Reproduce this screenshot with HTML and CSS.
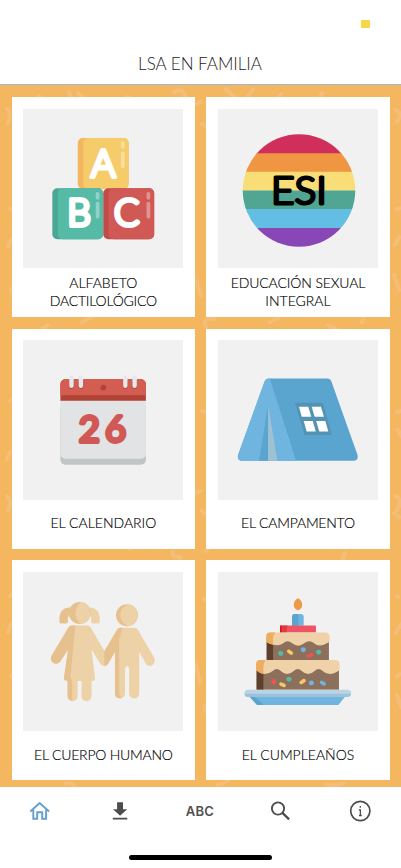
FILE: index.html
```
<!DOCTYPE html>
<html lang="es">
<head>
<meta charset="utf-8">
<meta name="viewport" content="width=device-width, initial-scale=1">
<title>LSA en familia</title>
<link rel="stylesheet" href="styles.css">
</head>
<body>
<div class="app">
  <header class="header">
    <div class="status"><span class="battery"></span></div>
    <h1 class="title">LSA EN FAMILIA</h1>
  </header>

  <main class="content">
    <svg class="confetti" viewBox="0 85 401 702" aria-hidden="true">
      <path d="M69 92l3 7M78 93l5 5M39 96l3 3M127 97l3 1M174 92q8-5 11 4l-2 3M194 105l6-3M226 89l9 9M253 89l-8 12M281 94l-3 5M322 93l-2 5M7 109q5 4 1 14M202 124l5 3M396 110q7 3 1 12M9 208l4 3M11 240l-3 7M197 281l4 15M395 245l4-8M397 209l3-1M394 275l5 15M11 289l1 4M43 328l5-3M82 322l12-6M206 327q-5-9 8-8M270 322l8-4M328 325l10 5M362 322l2-5M10 401l2-2M202 411l3 1M397 412l4-1M10 452l-3 7M398 430l3 6M7 496q6 7 1 14M196 493l4-2M396 496q7 4 1 14M202 511l4 3M394 513l5 4M173 552q-2 5 7 5v3M206 551l4-3M345 553l-3 8M129 549h1M10 596l2-2M204 599l1 1M397 596l1 1M11 624l-3 8M396 633l5-9M11 676l2-2M196 665l4 18M397 676l3-2M397 695l4 12M206 705q-3 6 1 7M65 784q8-3 10 4M218 785l10-4M326 784q8 3 18-1"/>
    </svg>

    <div class="grid">
      <article class="card">
        <svg class="art" viewBox="0 0 160 160">
          <g class="block">
            <rect x="54.7" y="29" width="51" height="51" rx="5" fill="#f3b55f"/>
            <path d="M65 29h35.7a5 5 0 0 1 5 5v41a5 5 0 0 1-5 5H65a5 5 0 0 1-5-5V34a5 5 0 0 1 5-5z" fill="#f6cb69"/>
            <path d="M99.8 34v4M99.8 44.5v13" class="shine"/>
            <rect x="29.2" y="79.5" width="51" height="51" rx="5" fill="#4ba693"/>
            <rect x="34.7" y="79.5" width="45.5" height="51" rx="5" fill="#55bba6"/>
            <path d="M74.6 85v4M74.6 95v13" class="shine"/>
            <rect x="80.3" y="79.5" width="51" height="51" rx="5" fill="#c14b4b"/>
            <rect x="85.6" y="79.5" width="45.7" height="51" rx="5" fill="#d15955"/>
            <path d="M125.5 85v4M125.5 95v13" class="shine"/>
          </g>
          <g class="toy-letter">
            <text x="80.3" y="68.4">A</text>
            <text x="56" y="117.6">B</text>
            <text x="103.8" y="117.6">C</text>
          </g>
        </svg>
        <h2 class="label"><span>ALFABETO</span><span class="snug">DACTILOLÓGICO</span></h2>
      </article>

      <article class="card">
        <svg class="art" viewBox="0 0 160 160">
          <clipPath id="disc"><circle cx="81" cy="81.7" r="56.4"/></clipPath>
          <g clip-path="url(#disc)">
            <path fill="#d12f5b" d="M20 25h122v20H20z"/>
            <path fill="#f09642" d="M20 44.3h122v19H20z"/>
            <path fill="#f9de78" d="M20 63h122v19H20z"/>
            <path fill="#51a693" d="M20 81.7h122v19H20z"/>
            <path fill="#62bee2" d="M20 100.3h122v19H20z"/>
            <path fill="#8846b7" d="M20 119.3h122v20H20z"/>
          </g>
          <text class="esi" x="53" y="95" textLength="56" lengthAdjust="spacingAndGlyphs">ESI</text>
        </svg>
        <h2 class="label"><span class="close">EDUCACIÓN SEXUAL</span><span>INTEGRAL</span></h2>
      </article>

      <article class="card">
        <svg class="art" viewBox="0 0 160 160">
          <rect x="37.3" y="65" width="85.7" height="60" rx="5" fill="#c0c5c5"/>
          <path d="M37.3 58H123v56a5 5 0 0 1-5 5H42.3a5 5 0 0 1-5-5z" fill="#e2e3e5"/>
          <path d="M37.3 61V44.3a5 5 0 0 1 5-5H118a5 5 0 0 1 5 5V61z" fill="#b04335"/>
          <path d="M37.3 55.3v-11a5 5 0 0 1 5-5H118a5 5 0 0 1 5 5v11z" fill="#d25d50"/>
          <circle cx="80.3" cy="47.7" r="2.9" fill="#b04335"/>
          <path d="M48.4 43V46.5M57.8 43V46.5M102.4 43V46.5M111.7 43V46.5" stroke="#b04335" stroke-width="4.8" stroke-linecap="round"/>
          <path d="M48.4 37.5V45.8M57.8 37.5V45.8M102.4 37.5V45.8M111.7 37.5V45.8" stroke="#e3e9ee" stroke-width="4.4" stroke-linecap="round"/>
          <text class="day" x="55.8" y="101.8">26</text>
        </svg>
        <h2 class="label"><span>EL CALENDARIO</span></h2>
      </article>

      <article class="card">
        <svg class="art" viewBox="0 0 160 160">
          <path d="M51 38.7h58.5q3 0 4 3L139.6 115q1.4 6-4 6H24q-5.5 0-4-6L46.5 41.7q1-3 4.5-3z" fill="#59a5cf"/>
          <path d="M51.8 38.7h-.8q-3.5 0-4.5 3L20 115q-1.5 6 4 6h54z" fill="#70b5e0"/>
          <path d="M50 65l-9 56h10z" fill="#59a5cf"/>
          <path d="M50 65v56h9.3z" fill="#9fc2d3"/>
          <path d="M77 63h28l9 32.3H86.7z" fill="#5593b4"/>
          <path d="M81 67h9.3l3 10h-9.6zM93.7 67h9.3l3 10h-9.3zM85.7 81.3h9.1l3 10.4h-9.1zM98.3 81.3h9.1l3 10.4h-9.1z" fill="#fff"/>
        </svg>
        <h2 class="label"><span class="snug">EL CAMPAMENTO</span></h2>
      </article>

      <article class="card">
        <svg class="art" viewBox="0 0 160 160">
          <path d="M48 35.5q-11-.5-11.700 10v4.700q0 1.500 1.500 1.500h5q2.200 0 2-2-.8-3.500 1.600-7.700z" fill="#e6c18e"/>
          <path d="M65 35.5q11-.5 11.700 10v4.700q0 1.500-1.500 1.500h-5q-2.200 0-2-2 .8-3.500-1.600-7.700z" fill="#edd2a7"/>
          <circle cx="56.7" cy="41.2" r="11" fill="#e6c18e"/>
          <path d="M58 30.3a11 11 0 0 1 0 21.8c-7.500-4.500-7.500-17.300 0-21.800z" fill="#edd2a7"/>
          <path d="M49 53.7h15.500q2 0 3 1.800L86 87q1 5.500-4 7.300-3 .3-4.700-2.300L68.500 77.700l3.500 29q.2 2.300-2 2.600h-1.500V124.500a5 5 0 0 1-10 0V109.300h-4v15.200a5 5 0 0 1-10 0V109.300q-4-.5-3.700-2.700L45 77.700 37.400 89.500a5.200 5.200 0 0 1-8.900-5.500L45.500 55.500q1-1.800 3.500-1.800z" fill="#edd2a7"/>
          <path d="M49 53.7h3.300L47.500 104q0 3 1.700 5.300V129a5 5 0 0 1-4.700-4.500V109.300q-4-.5-3.700-2.700L45 77.700 37.400 89.500a5.200 5.200 0 0 1-8.900-5.500L45.500 55.500q1-1.800 3.500-1.800z" fill="#e6c18e"/>
          <circle cx="104" cy="43.3" r="11" fill="#e6c18e"/>
          <path d="M105 32.4a11 11 0 0 1 0 21.8c-10-4-10-17.800 0-21.800z" fill="#edd2a7"/>
          <path d="M97.5 56h14.200q2 0 3.300 2l16.600 28.500q1.300 4.500-2.300 7-4.500 1.500-6.300-1.300L116.300 80v41.700a5 5 0 0 1-10.100 0V96.500q-2-4.400-4.100 0v25.200a5 5 0 0 1-10.100 0V80l-7.200 12.500q-1.200 1.800-3.500 1.800V79.700L94 58q1.200-2 3.500-2z" fill="#edd2a7"/>
          <path d="M97.5 56h2L96.200 68v51q0 5 2.300 7.500-6.500.8-6.500-4.800V80l-7.200 12.500q-1.200 1.800-3.500 1.800V79.700L94 58q1.200-2 3.500-2z" fill="#e6c18e"/>
        </svg>
        <h2 class="label"><span class="snug">EL CUERPO HUMANO</span></h2>
      </article>

      <article class="card">
        <svg class="art" viewBox="0 0 160 160">
          <path d="M80 26.300q4.200 2.300 4.200 6.500T80 38.300q-4.200-1.300-4.200-5.500t4.200-6.500z" fill="#ee9a44"/>
          <path d="M74 54v-9q0-3 3-3h5.700q3 0 3 3v9z" fill="#70b5e0"/>
          <path d="M74 54v-9q0-3 3-3h2.500q1 1 1 3v9z" fill="#59a5cf"/>
          <path d="M62 60.700v-6q0-1 1-1h34q1 0 1 1v6z" fill="#ed5564"/>
          <path d="M62 60.700v-6q0-1 1-1h6.500l-1 7z" fill="#dc3d3d"/>
          <path d="M62 54h1.500v6.700H62z" fill="#df1218"/>
          <path d="M48.600 65h62.400v23.500H48.600z" fill="#8d705c"/>
          <path d="M48.600 65h6.400v23.500h-6.400z" fill="#5e402c"/>
          <path d="M48 70v-5q0-4.300 4.300-4.300h55q4.400 0 4.400 4.300v5q-10 6.500-15.500 1.500-5-4-10 0-6 4.800-12 0-5-4-9 0-6 4.500-17.200-1.500z" fill="#efd2a7"/>
          <path d="M48 70v-5q0-4.300 4.300-4.300h5q-2.300 2-2.300 6v6.300q-4-.5-7-3z" fill="#eead60"/>
          <path d="M38.500 93h82.600v25H38.500z" fill="#8d705c"/>
          <path d="M38.500 93h6.800v25h-6.800z" fill="#5e402c"/>
          <path d="M38 98.500v-6q0-4.200 4.300-4.200h75q4.400 0 4.400 4.200v6q-10 7-17 .7-4-4-8 0-6.500 6-13 0-4-4-8 0-6.500 6-13 0-4-4-8 0Q46.500 105.500 38 98.500z" fill="#efd2a7"/>
          <path d="M38 98.500v-6q0-4.200 4.300-4.200h5.500q-2.500 2-2.500 6v7.900q-4-.7-7.300-3.700z" fill="#eead60"/>
          <g fill="#55bba6"><circle cx="62.6" cy="81.8" r="2.5"/><circle cx="100.7" cy="80.5" r="2.5"/><circle cx="71" cy="107.5" r="2.5"/></g>
          <g fill="#6db6e4"><circle cx="85.3" cy="78" r="2.5"/><circle cx="93.5" cy="111.3" r="2.5"/></g>
          <circle cx="55.7" cy="110" r="2.5" fill="#ed5555"/>
          <g class="sprinkle"><path stroke="#f8ca66" d="M70.700 79.500l2.500 1.700M63 112.300l3 1.400M83.200 110.700l2.800-1.800"/><path stroke="#ed5555" d="M90.500 84.400l3-1.500"/><path stroke="#6db6e4" d="M103.700 110.700l2.500 1.400"/></g>
          <path d="M31 124.500h96.500l-7 8.800H39z" fill="#70b5e0"/>
          <path d="M31 124.500h5l10 8.800h-7z" fill="#59a5cf"/>
          <rect x="26.3" y="118" width="107" height="7.3" rx="3.6" fill="#b9d4e5"/>
          <path d="M26.500 122h106.600q-1 3.300-4 3.300H30q-3 0-3.500-3.300z" fill="#9bc2da"/>
        </svg>
        <h2 class="label"><span>EL CUMPLEAÑOS</span></h2>
      </article>
    </div>
  </main>

  <nav class="tabs">
    <a class="tab active"><svg viewBox="0 0 24 24"><path d="M2.3 12.5 11.700 4l9.400 8.500M5.300 10.800v9h3.900v-6.500h5v6.500h3.900v-9" fill="none" stroke="currentColor" stroke-width="1.900"/></svg></a>
    <a class="tab"><svg viewBox="0 0 24 24"><path d="M4.800 18.700h14.500v1.800H4.800zM9.100 3.200H15v7h4.200l-7.100 6.600L5 10.200h4.100z" fill="currentColor"/></svg></a>
    <a class="tab abc">ABC</a>
    <a class="tab"><svg viewBox="0 0 24 24"><circle cx="10" cy="9.500" r="6.100" fill="none" stroke="currentColor" stroke-width="1.900"/><path d="M14.200 13.700l6.900 6.700" stroke="currentColor" stroke-width="2.300"/></svg></a>
    <a class="tab"><svg viewBox="0 0 24 24"><circle cx="12.300" cy="12" r="9.600" fill="none" stroke="currentColor" stroke-width="1.700"/><path d="M12.300 7v1.800M10.900 11h1.500v5.300M11 16.500h2.800" fill="none" stroke="currentColor" stroke-width="1.300"/></svg></a>
  </nav>
  <div class="home-row"><span class="home-bar"></span></div>
</div>
</body>
</html>
```
FILE: styles.css
```
* { box-sizing: border-box; }
body { margin: 0; background: #fff; }

.app {
  display: flex;
  flex-direction: column;
  width: 401px;
  height: 868px;
  overflow: hidden;
  font-family: Lato, "Open Sans", sans-serif;
  color: #171717;
}

.header {
  flex: none;
  height: 85px;
  border-bottom: 1px solid #94b9d7;
}
.status {
  display: flex;
  justify-content: flex-end;
  height: 48px;
  padding: 20px 31px 0 0;
}
.battery {
  width: 9px;
  height: 8px;
  border-radius: 1px;
  background: #f9d649;
}
.title {
  margin: 0;
  padding-right: 1px;
  text-align: center;
  font-size: 17px;
  font-weight: 300;
  line-height: 32px;
  color: #222;
}

.content {
  position: relative;
  flex: none;
  height: 702px;
  overflow: hidden;
  background: #f4b75f;
}
.confetti {
  position: absolute;
  left: 0;
  top: 0;
  width: 401px;
  height: 702px;
  fill: none;
  stroke: #f5be77;
  stroke-width: 4;
  stroke-linecap: round;
}
.grid {
  position: relative;
  display: grid;
  grid-template-columns: 183.4px 183.4px;
  grid-auto-rows: 220px;
  gap: 11.6px 11.2px;
  padding: 12px 0 0 11.7px;
}
.card {
  display: flex;
  flex-direction: column;
  align-items: center;
  padding-top: 11.6px;
  background: #fff;
}
.art {
  flex: none;
  display: block;
  width: 160px;
  height: 159.6px;
  background: #f1f1f1;
}
.label {
  flex: 1;
  display: grid;
  place-content: center;
  margin: 0;
  padding-bottom: 2px;
  text-align: center;
  font-size: 14px;
  font-weight: 300;
  line-height: 18px;
  white-space: nowrap;
  color: #000;
  -webkit-text-stroke: .15px #000;
}
.snug { letter-spacing: -.22px; }
.close { letter-spacing: -.12px; }

.shine {
  fill: none;
  stroke: #fff;
  stroke-opacity: .35;
  stroke-width: 3.8;
  stroke-linecap: round;
}
.toy-letter text {
  font: 300 37.5px Lato, sans-serif;
  text-anchor: middle;
  fill: #fff;
  stroke: #fff;
  stroke-width: 4.2;
  stroke-linejoin: round;
}
.esi {
  font: 300 37px Lato, sans-serif;
  stroke: #000;
  stroke-width: 3;
  stroke-linejoin: round;
}
.day {
  font: 400 36.5px Lato, sans-serif;
  letter-spacing: 5px;
  fill: #d15955;
  stroke: #d15955;
  stroke-width: 3.8;
  stroke-linejoin: round;
}
.sprinkle {
  fill: none;
  stroke-width: 3.6;
  stroke-linecap: round;
}

.tabs {
  flex: none;
  display: grid;
  grid-template-columns: repeat(5, 1fr);
  height: 48px;
  padding-right: 1px;
  background: #fff;
}
.tab {
  display: flex;
  align-items: center;
  justify-content: center;
  color: #4d4d4d;
}
.tab svg { width: 24px; height: 24px; }
.active { color: #659fcb; }
.abc {
  font: 600 13px Inter, sans-serif;
  letter-spacing: .3px;
  color: #505050;
}
.home-row {
  flex: 1;
  display: flex;
  justify-content: center;
  align-items: flex-start;
  padding-top: 20px;
}
.home-bar {
  width: 143px;
  height: 5px;
  border-radius: 3px;
  background: #000;
}
```
